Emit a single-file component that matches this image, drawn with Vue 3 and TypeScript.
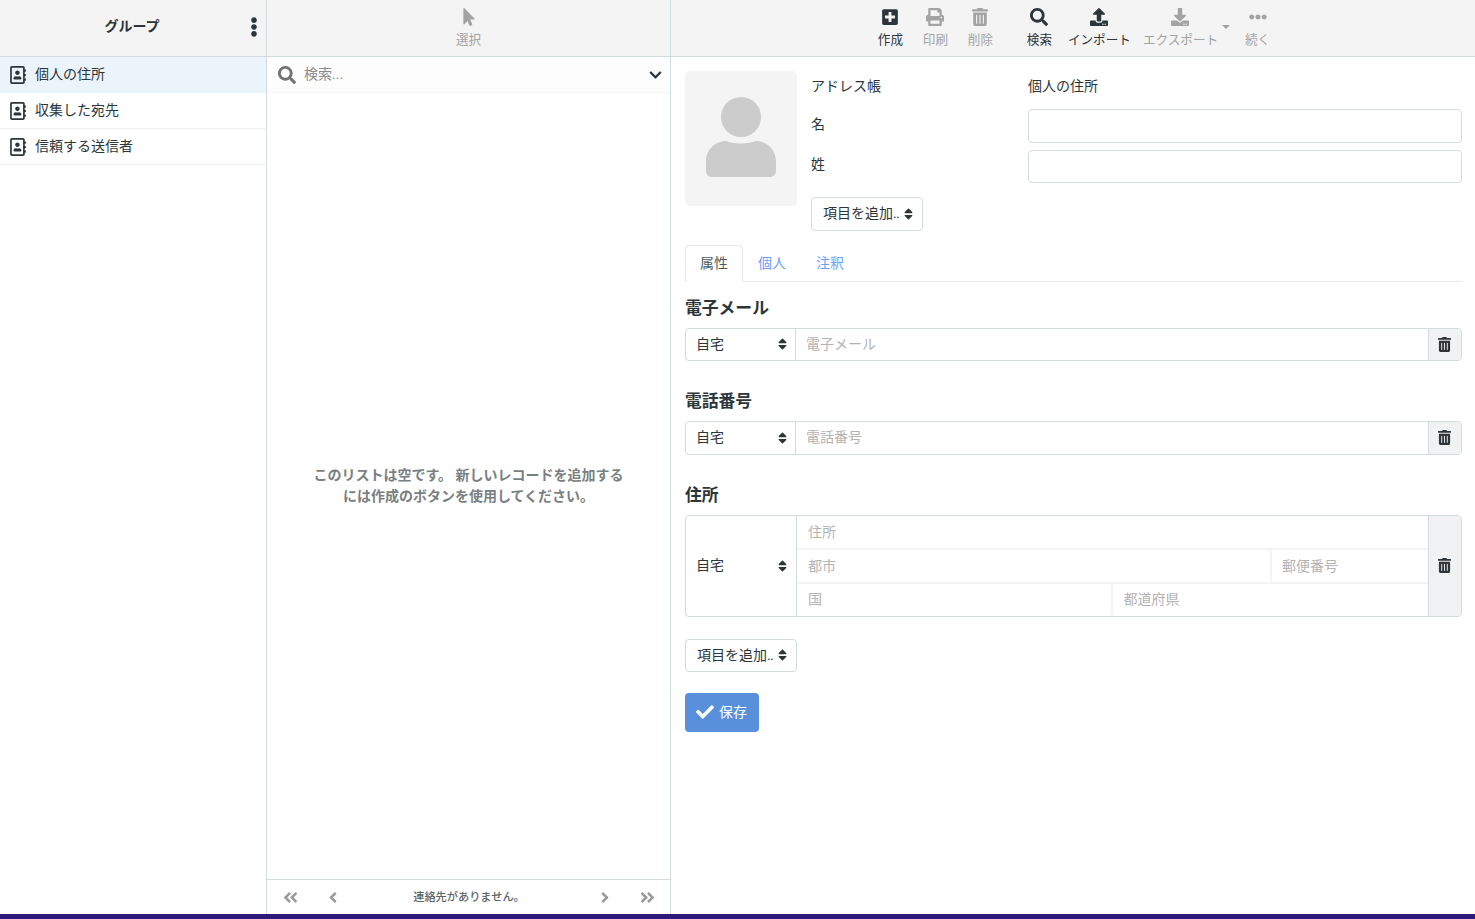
<template>
    <div class="page">
        <div class="layout">
            <aside class="col-groups">
                <header class="head">
                    <span class="head-title">グループ</span>
                    <svg class="head-more" viewBox="0 0 192 512"><path :d="icons.ellipsisV" /></svg>
                </header>
                <ul class="group-list">
                    <li v-for="(g, i) in groups" :key="g" class="group-item" :class="{ selected: i === 0 }">
                        <svg class="group-icon" viewBox="0 0 448 512"><path :d="icons.book" /></svg>
                        <span>{{ g }}</span>
                    </li>
                </ul>
            </aside>

            <section class="col-list">
                <header class="head head-center">
                    <div class="tool disabled">
                        <svg class="tool-icon" viewBox="0 0 320 512"><path :d="icons.pointer" /></svg>
                        <span>選択</span>
                    </div>
                </header>
                <div class="searchbar">
                    <svg class="search-icon" viewBox="0 0 512 512"><path :d="icons.search" /></svg>
                    <input class="search-input" placeholder="検索..." />
                    <svg class="search-chevron" viewBox="0 0 448 512"><path :d="icons.chevronDown" /></svg>
                </div>
                <div class="empty">
                    <p>このリストは空です。 新しいレコードを追加する<br />には作成のボタンを使用してください。</p>
                </div>
                <footer class="pager">
                    <svg class="pager-icon" viewBox="0 0 448 512"><path :d="icons.doubleLeft" /></svg>
                    <svg class="pager-icon single" viewBox="0 0 256 512"><path :d="icons.angleLeft" /></svg>
                    <span class="pager-text">連絡先がありません。</span>
                    <svg class="pager-icon single" viewBox="0 0 256 512"><path :d="icons.angleRight" /></svg>
                    <svg class="pager-icon" viewBox="0 0 448 512"><path :d="icons.doubleRight" /></svg>
                </footer>
            </section>

            <main class="col-form">
                <header class="head head-center toolbar">
                    <template v-for="t in tools" :key="t.label">
                        <div class="tool" :class="{ disabled: t.disabled, spaced: t.spaced }">
                            <svg class="tool-icon" :viewBox="t.box"><path :d="t.path" /></svg>
                            <span>{{ t.label }}</span>
                        </div>
                        <span v-if="t.caret" class="caret"></span>
                    </template>
                </header>

                <form class="form" @submit.prevent>
                    <div class="contact-head">
                        <div class="photo">
                            <svg class="photo-icon" viewBox="0 0 70 80">
                                <circle cx="35" cy="20" r="20" />
                                <path d="M20 44c4 1.500 9 2.500 15 2.500s11-1 15-2.500c11 0 20 9 20 20v10c0 3.300-2.700 6-6 6H6c-3.300 0-6-2.700-6-6V64c0-11 9-20 20-20z" />
                            </svg>
                        </div>
                        <div class="head-fields">
                            <div class="field-row book-row">
                                <span>アドレス帳</span>
                                <span>個人の住所</span>
                            </div>
                            <div class="field-row">
                                <label>名</label>
                                <input class="text-input" />
                            </div>
                            <div class="field-row">
                                <label>姓</label>
                                <input class="text-input" />
                            </div>
                            <div class="select add-select small">
                                <span>項目を追加<span class="dots">..</span></span>
                                <svg class="sort" viewBox="0 0 320 512"><path :d="icons.sort" /></svg>
                            </div>
                        </div>
                    </div>

                    <nav class="tabs">
                        <a class="tab active">属性</a>
                        <a class="tab">個人</a>
                        <a class="tab">注釈</a>
                    </nav>

                    <h3 class="section-title">電子メール</h3>
                    <div class="group">
                        <div class="select inner">
                            <span>自宅</span>
                            <svg class="sort" viewBox="0 0 320 512"><path :d="icons.sort" /></svg>
                        </div>
                        <input class="group-input" placeholder="電子メール" />
                        <div class="group-trash">
                            <svg viewBox="0 0 448 512"><path :d="icons.trash" /></svg>
                        </div>
                    </div>

                    <h3 class="section-title">電話番号</h3>
                    <div class="group">
                        <div class="select inner">
                            <span>自宅</span>
                            <svg class="sort" viewBox="0 0 320 512"><path :d="icons.sort" /></svg>
                        </div>
                        <input class="group-input" placeholder="電話番号" />
                        <div class="group-trash">
                            <svg viewBox="0 0 448 512"><path :d="icons.trash" /></svg>
                        </div>
                    </div>

                    <h3 class="section-title">住所</h3>
                    <div class="group address">
                        <div class="select inner">
                            <span>自宅</span>
                            <svg class="sort" viewBox="0 0 320 512"><path :d="icons.sort" /></svg>
                        </div>
                        <div class="address-fields">
                            <input class="addr-input" placeholder="住所" />
                            <div class="addr-row">
                                <input class="addr-input city" placeholder="都市" />
                                <input class="addr-input zip" placeholder="郵便番号" />
                            </div>
                            <div class="addr-row">
                                <input class="addr-input half" placeholder="国" />
                                <input class="addr-input half" placeholder="都道府県" />
                            </div>
                        </div>
                        <div class="group-trash">
                            <svg viewBox="0 0 448 512"><path :d="icons.trash" /></svg>
                        </div>
                    </div>

                    <div class="select add-select bottom">
                        <span>項目を追加<span class="dots">..</span></span>
                        <svg class="sort" viewBox="0 0 320 512"><path :d="icons.sort" /></svg>
                    </div>

                    <button class="save-btn" type="submit">
                        <svg viewBox="0 0 512 512"><path :d="icons.check" /></svg>
                        <span>保存</span>
                    </button>
                </form>
            </main>
        </div>
        <div class="bottom-bar"></div>
    </div>
</template>

<script setup lang="ts">
interface Tool {
    label: string
    box: string
    path: string
    disabled?: boolean
    spaced?: boolean
    caret?: boolean
}

const icons = {
    ellipsisV:
        'M96 184c39.8 0 72 32.2 72 72s-32.2 72-72 72-72-32.2-72-72 32.2-72 72-72zM24 80c0 39.8 32.2 72 72 72s72-32.2 72-72S135.8 8 96 8 24 40.200 24 80zm0 352c0 39.8 32.2 72 72 72s72-32.2 72-72-32.2-72-72-72-72 32.2-72 72z',
    book: 'M436 160c6.600 0 12-5.400 12-12v-40c0-6.600-5.400-12-12-12h-20V48c0-26.500-21.500-48-48-48H48C21.500 0 0 21.500 0 48v416c0 26.500 21.500 48 48 48h320c26.500 0 48-21.500 48-48v-48h20c6.600 0 12-5.400 12-12v-40c0-6.600-5.400-12-12-12h-20v-64h20c6.600 0 12-5.400 12-12v-40c0-6.600-5.400-12-12-12h-20v-64h20zm-68 304H48V48h320v416zM208 256c35.300 0 64-28.700 64-64s-28.700-64-64-64-64 28.700-64 64 28.700 64 64 64zm-89.600 128h179.200c12.400 0 22.400-8.600 22.400-19.200v-19.200c0-31.800-30.100-57.600-67.200-57.600-10.800 0-18.700 8-44.800 8-26.900 0-33.400-8-44.800-8-37.100 0-67.200 25.800-67.200 57.600v19.200c0 10.600 10 19.200 22.400 19.200z',
    pointer:
        'M302.189 329.126H196.105l55.831 135.993c3.889 9.428-.555 19.999-9.444 23.999l-49.165 21.427c-9.165 4-19.443-.571-23.332-9.714l-53.053-129.136-86.664 89.138C18.729 472.71 0 463.554 0 447.977V18.299C0 1.899 19.921-6.096 30.277 5.443l284.412 292.542c11.472 11.179 3.007 31.141-12.5 31.141z',
    search: 'M505 442.700L405.300 343c-4.500-4.500-10.600-7-17-7H372c27.600-35.300 44-79.700 44-128C416 93.100 322.900 0 208 0S0 93.100 0 208s93.100 208 208 208c48.300 0 92.700-16.400 128-44v16.300c0 6.400 2.500 12.500 7 17l99.700 99.700c9.400 9.400 24.600 9.400 33.900 0l28.300-28.300c9.400-9.400 9.400-24.600.1-34zM208 336c-70.700 0-128-57.200-128-128 0-70.700 57.200-128 128-128 70.700 0 128 57.200 128 128 0 70.700-57.200 128-128 128z',
    chevronDown:
        'M207.029 381.476L12.686 187.132c-9.373-9.373-9.373-24.569 0-33.941l22.667-22.667c9.357-9.357 24.522-9.375 33.901-.04L224 284.505l154.745-154.021c9.379-9.335 24.544-9.317 33.901.04l22.667 22.667c9.373 9.373 9.373 24.569 0 33.941L240.971 381.476c-9.373 9.372-24.569 9.372-33.942 0z',
    doubleLeft:
        'M223.700 239l136-136c9.400-9.400 24.600-9.400 33.900 0l22.600 22.600c9.400 9.400 9.400 24.600 0 33.900L319.900 256l96.400 96.400c9.400 9.400 9.400 24.600 0 33.900L393.700 409c-9.400 9.400-24.600 9.400-33.900 0l-136-136c-9.500-9.400-9.500-24.600-.1-34zm-192 34l136 136c9.400 9.400 24.600 9.400 33.900 0l22.600-22.600c9.400-9.400 9.400-24.600 0-33.900L127.900 256l96.400-96.400c9.400-9.400 9.400-24.600 0-33.900L201.700 103c-9.400-9.400-24.600-9.400-33.900 0l-136 136c-9.500 9.400-9.500 24.600-.1 34z',
    angleLeft:
        'M31.700 239l136-136c9.400-9.400 24.600-9.400 33.900 0l22.600 22.600c9.400 9.400 9.400 24.600 0 33.900L127.900 256l96.400 96.400c9.400 9.400 9.400 24.600 0 33.900L201.700 409c-9.400 9.400-24.600 9.400-33.900 0l-136-136c-9.500-9.400-9.500-24.600-.1-34z',
    angleRight:
        'M224.300 273l-136 136c-9.400 9.400-24.600 9.400-33.900 0l-22.600-22.600c-9.400-9.400-9.400-24.600 0-33.900l96.400-96.400-96.400-96.400c-9.400-9.400-9.400-24.600 0-33.900L54.300 103c9.400-9.400 24.600-9.400 33.900 0l136 136c9.500 9.400 9.500 24.600.1 34z',
    doubleRight:
        'M224.300 273l-136 136c-9.400 9.400-24.600 9.400-33.900 0l-22.600-22.600c-9.400-9.400-9.400-24.600 0-33.900l96.400-96.400-96.400-96.400c-9.400-9.400-9.400-24.600 0-33.900L54.300 103c9.400-9.400 24.600-9.400 33.900 0l136 136c9.500 9.400 9.500 24.600.1 34zm192-34l-136-136c-9.400-9.400-24.600-9.400-33.900 0l-22.600 22.600c-9.400 9.400-9.400 24.600 0 33.900l96.400 96.400-96.400 96.400c-9.400 9.400-9.400 24.600 0 33.900l22.600 22.600c9.400 9.400 24.600 9.400 33.900 0l136-136c9.500-9.400 9.500-24.600-.1-34z',
    sort: 'M41 288h238c21.400 0 32.100 25.900 17 41L177 448c-9.400 9.400-24.600 9.400-33.900 0L24 329c-15.100-15.100-4.400-41 17-41zm255-105L177 64c-9.400-9.400-24.600-9.400-33.900 0L24 183c-15.100 15.100-4.400 41 17 41h238c21.400 0 32.100-25.900 17-41z',
    trash: 'M32 464a48 48 0 0 0 48 48h288a48 48 0 0 0 48-48V128H32zm272-256a16 16 0 0 1 32 0v224a16 16 0 0 1-32 0zm-96 0a16 16 0 0 1 32 0v224a16 16 0 0 1-32 0zm-96 0a16 16 0 0 1 32 0v224a16 16 0 0 1-32 0zM432 32H312l-9.400-18.700A24 24 0 0 0 281.100 0H166.800a23.720 23.720 0 0 0-21.400 13.300L136 32H16A16 16 0 0 0 0 48v32a16 16 0 0 0 16 16h416a16 16 0 0 0 16-16V48a16 16 0 0 0-16-16z',
    check: 'M173.898 439.404l-166.400-166.400c-9.997-9.997-9.997-26.206 0-36.204l36.203-36.204c9.997-9.998 26.207-9.998 36.204 0L192 312.690 432.095 72.596c9.997-9.997 26.207-9.997 36.204 0l36.203 36.204c9.997 9.997 9.997 26.206 0 36.204l-294.400 294.401c-9.998 9.997-26.207 9.997-36.204-.001z',
    plus: 'M400 32H48C21.500 32 0 53.500 0 80v352c0 26.500 21.500 48 48 48h352c26.500 0 48-21.500 48-48V80c0-26.500-21.500-48-48-48zm-32 252c0 6.600-5.400 12-12 12h-92v92c0 6.600-5.400 12-12 12h-56c-6.600 0-12-5.400-12-12v-92H92c-6.600 0-12-5.400-12-12v-56c0-6.600 5.400-12 12-12h92v-92c0-6.600 5.400-12 12-12h56c6.600 0 12 5.400 12 12v92h92c6.600 0 12 5.400 12 12v56z',
    print: 'M448 192V77.250c0-8.490-3.370-16.620-9.370-22.630L393.370 9.370c-6-6-14.140-9.370-22.630-9.370H96C78.330 0 64 14.330 64 32v160c-35.350 0-64 28.650-64 64v112c0 8.840 7.160 16 16 16h48v96c0 17.670 14.330 32 32 32h320c17.670 0 32-14.330 32-32v-96h48c8.840 0 16-7.160 16-16V256c0-35.350-28.650-64-64-64zm-64 256H128v-96h256v96zm0-224H128V64h192v48c0 8.840 7.160 16 16 16h48v96zm48 72c-13.250 0-24-10.750-24-24 0-13.260 10.750-24 24-24s24 10.740 24 24c0 13.250-10.750 24-24 24z',
    upload: 'M296 384h-80c-13.300 0-24-10.700-24-24V192h-87.700c-17.800 0-26.700-21.500-14.100-34.100L242.300 5.700c7.500-7.500 19.800-7.500 27.300 0l152.200 152.200c12.600 12.600 3.700 34.100-14.100 34.100H320v168c0 13.300-10.700 24-24 24zm216-8v112c0 13.300-10.700 24-24 24H24c-13.300 0-24-10.700-24-24V376c0-13.300 10.700-24 24-24h136v8c0 30.900 25.100 56 56 56h80c30.900 0 56-25.100 56-56v-8h136c13.300 0 24 10.700 24 24zm-124 88c0-11-9-20-20-20s-20 9-20 20 9 20 20 20 20-9 20-20zm64 0c0-11-9-20-20-20s-20 9-20 20 9 20 20 20 20-9 20-20z',
    download:
        'M216 0h80c13.300 0 24 10.700 24 24v168h87.700c17.800 0 26.700 21.500 14.100 34.100L269.700 378.300c-7.500 7.500-19.800 7.500-27.300 0L90.100 226.100c-12.600-12.600-3.700-34.100 14.100-34.100H192V24c0-13.300 10.700-24 24-24zm296 376v112c0 13.300-10.700 24-24 24H24c-13.300 0-24-10.700-24-24V376c0-13.300 10.700-24 24-24h146.700l49 49c20.100 20.100 52.500 20.100 72.600 0l49-49H488c13.300 0 24 10.700 24 24zm-124 88c0-11-9-20-20-20s-20 9-20 20 9 20 20 20 20-9 20-20zm64 0c0-11-9-20-20-20s-20 9-20 20 9 20 20 20 20-9 20-20z',
    ellipsisH:
        'M328 256c0 39.800-32.200 72-72 72s-72-32.200-72-72 32.200-72 72-72 72 32.200 72 72zm104-72c-39.800 0-72 32.200-72 72s32.200 72 72 72 72-32.200 72-72-32.200-72-72-72zm-352 0c-39.800 0-72 32.200-72 72s32.200 72 72 72 72-32.200 72-72-32.200-72-72-72z'
}

const groups = ['個人の住所', '収集した宛先', '信頼する送信者']

const tools: Tool[] = [
    { label: '作成', box: '0 0 448 512', path: icons.plus },
    { label: '印刷', box: '0 0 512 512', path: icons.print, disabled: true },
    { label: '削除', box: '0 0 448 512', path: icons.trash, disabled: true },
    { label: '検索', box: '0 0 512 512', path: icons.search, spaced: true },
    { label: 'インポート', box: '0 0 512 512', path: icons.upload },
    { label: 'エクスポート', box: '0 0 512 512', path: icons.download, disabled: true, caret: true },
    { label: '続く', box: '0 0 512 512', path: icons.ellipsisH, disabled: true }
]
</script>

<style>
html,
body {
    margin: 0;
    height: 100%;
    overflow: hidden;
}
</style>

<style scoped>
.page {
    height: 100vh;
    display: flex;
    flex-direction: column;
    font-family: Roboto, "Noto Sans CJK JP", sans-serif;
    font-size: 14px;
    line-height: 21px;
    color: #2c363a;
    background: #fff;
}

.layout {
    flex: 1;
    min-height: 0;
    display: flex;
}

.bottom-bar {
    height: 5px;
    background: #2b1a78;
}

.col-groups {
    width: 266px;
    border-right: 1px solid #d4dbde;
    display: flex;
    flex-direction: column;
}

.col-list {
    width: 403px;
    border-right: 1px solid #d4dbde;
    display: flex;
    flex-direction: column;
}

.col-form {
    flex: 1;
    min-width: 0;
    display: flex;
    flex-direction: column;
}

.head {
    height: 56px;
    flex-shrink: 0;
    background: #f4f4f4;
    border-bottom: 1px solid #d4dbde;
    display: flex;
    align-items: center;
    position: relative;
}

.head-center {
    justify-content: center;
    align-items: flex-start;
}

.toolbar {
    padding-left: 2px;
}

.head-title {
    flex: 1;
    text-align: center;
    font-weight: 700;
    padding-right: 2px;
    margin-top: -3px;
}

.head-more {
    position: absolute;
    left: 250px;
    top: 17px;
    width: 8px;
    height: 20px;
    fill: #2c363a;
}

.group-list {
    list-style: none;
    margin: 0;
    padding: 0;
}

.group-item {
    height: 35px;
    display: flex;
    align-items: center;
    gap: 9px;
    padding-left: 10px;
    border-bottom: 1px solid #f2f2f2;
}

.group-item.selected {
    background: #ebf3fb;
    border-bottom-color: #ebf3fb;
}

.group-icon {
    width: 16px;
    height: 18px;
    fill: #2c363a;
}

.tool {
    min-width: 45px;
    padding: 8px 6px 0;
    box-sizing: border-box;
    display: flex;
    flex-direction: column;
    align-items: center;
    font-size: 12.6px;
    line-height: 18px;
    color: #2c363a;
}

.tool.disabled {
    color: #a3a3a3;
}

.tool.spaced {
    margin-left: 14px;
}

.tool-icon {
    width: 20px;
    height: 18px;
    margin-bottom: 5px;
    fill: #2c363a;
}

.tool.disabled .tool-icon {
    fill: #a3a3a3;
}

.caret {
    width: 11px;
    position: relative;
}

.caret::after {
    content: "";
    position: absolute;
    left: -2px;
    top: 25px;
    border: 4px solid transparent;
    border-top: 4px solid #a3a3a3;
}

.searchbar {
    height: 35px;
    flex-shrink: 0;
    border-bottom: 1px solid #f4f4f4;
    background: #fdfdfd;
    display: flex;
    align-items: center;
    padding: 0 8px 0 11px;
    gap: 8px;
}

.search-icon {
    width: 18px;
    height: 18px;
    fill: #707274;
}

.search-input {
    flex: 1;
    min-width: 0;
    border: 0;
    outline: 0;
    padding: 0;
    background: transparent;
    font: inherit;
}

.search-input::placeholder {
    color: #8a8a8a;
    opacity: 1;
}

.search-chevron {
    width: 13px;
    height: 14px;
    fill: #2c363a;
}

.empty {
    flex: 1;
    display: flex;
    align-items: center;
    justify-content: center;
    text-align: center;
    color: #7a7f82;
    font-weight: 700;
}

.empty p {
    margin: 0;
}

.pager {
    height: 34px;
    flex-shrink: 0;
    border-top: 1px solid #d4dbde;
    display: flex;
    align-items: center;
    padding: 0 14px 0 15px;
}

.pager-icon {
    width: 17px;
    height: 17px;
    fill: #9a9a9a;
}

.pager-icon.single {
    width: 10px;
    margin: 0 29px;
}

.pager-text {
    flex: 1;
    text-align: center;
    font-size: 11.2px;
    font-weight: 500;
    color: #5c6468;
}

.form {
    padding: 14px 13px 0 14px;
}

.contact-head {
    display: flex;
    gap: 14px;
}

.photo {
    width: 112px;
    height: 135px;
    flex-shrink: 0;
    border-radius: 5px;
    background: #f4f4f4;
    display: flex;
    align-items: center;
    justify-content: center;
}

.photo-icon {
    width: 70px;
    height: 80px;
    margin-top: -3px;
    fill: #cccccc;
}

.head-fields {
    flex: 1;
    min-width: 0;
}

.field-row {
    display: grid;
    grid-template-columns: 217px 1fr;
    align-items: center;
    margin-bottom: 7px;
}

.field-row label {
    margin-bottom: 3px;
}

.book-row {
    height: 30px;
    margin-bottom: 8px;
}

.text-input {
    height: 33.500px;
    box-sizing: border-box;
    width: 100%;
    border: 1px solid #d4dbde;
    border-radius: 4px;
    outline: 0;
}

.select {
    display: flex;
    align-items: center;
    justify-content: space-between;
    padding: 0 9px 0 11px;
    box-sizing: border-box;
}

.dots {
    letter-spacing: -0.6px;
}

.add-select {
    border: 1px solid #d4dbde;
    border-radius: 4px;
    background: #fff;
    height: 33.500px;
}

.add-select.small {
    width: 112px;
    margin-top: 14px;
}

.add-select.bottom {
    width: 112px;
    height: 33px;
    margin-top: 22px;
}

.sort {
    width: 9px;
    height: 14px;
    fill: #2c363a;
    flex-shrink: 0;
}

.tabs {
    display: flex;
    margin-top: 14px;
    height: 36px;
    border-bottom: 1px solid #e4e8ea;
}

.tab {
    height: 37px;
    box-sizing: border-box;
    padding: 0 14px;
    display: flex;
    align-items: center;
    color: #6a9fff;
    border: 1px solid transparent;
}

.tab.active {
    color: #4e5a5f;
    background: #fff;
    border-color: #e4e8ea #e4e8ea #fff;
    border-radius: 4px 4px 0 0;
}

.section-title {
    margin: 15px 0 9px;
    font-size: 16.800px;
    line-height: 22px;
    font-weight: 700;
}

.group {
    display: flex;
    height: 33.500px;
    box-sizing: border-box;
    border: 1px solid #d4dbde;
    border-radius: 4px;
    margin-bottom: 29px;
}

.group + .section-title {
    margin-top: 29px;
}

.inner {
    width: 110px;
    flex-shrink: 0;
    border-right: 1px solid #d4dbde;
    padding-left: 10px;
    padding-right: 8px;
}

.group-input {
    flex: 1;
    min-width: 0;
    border: 0;
    outline: 0;
    padding: 0 11px 0 10px;
    font: inherit;
    background: transparent;
}

.group-input::placeholder,
.addr-input::placeholder {
    color: #b3b3b3;
    opacity: 1;
}

.group-trash {
    width: 33px;
    flex-shrink: 0;
    border-left: 1px solid #d4dbde;
    background: #f1f2f4;
    border-radius: 0 3px 3px 0;
    display: flex;
    align-items: center;
    justify-content: center;
    padding-right: 1px;
    box-sizing: border-box;
}

.group-trash svg {
    width: 13px;
    height: 15px;
    fill: #2c363a;
}

.group.address {
    height: 102px;
    margin-bottom: 0;
}

.address .inner {
    width: 111px;
    padding-right: 9px;
}

.address-fields {
    flex: 1;
    min-width: 0;
    display: flex;
    flex-direction: column;
}

.addr-row {
    display: flex;
    border-top: 2px solid #f4f4f4;
}

.addr-input {
    height: 32px;
    box-sizing: border-box;
    border: 0;
    outline: 0;
    padding: 0 11px;
    font: inherit;
    background: transparent;
    min-width: 0;
}

.addr-input.city {
    flex: 1;
    border-right: 2px solid #f4f4f4;
}

.addr-input.zip {
    width: 156px;
    padding-left: 10px;
}

.addr-input.half {
    width: 50%;
    height: 31px;
}

.addr-input.half:first-child {
    border-right: 2px solid #f4f4f4;
}

.save-btn {
    display: flex;
    align-items: center;
    gap: 5px;
    margin-top: 21px;
    width: 74px;
    height: 39px;
    padding: 0 0 0 11px;
    box-sizing: border-box;
    border: 0;
    border-radius: 4px;
    background: #5890dc;
    color: #fff;
    font: inherit;
}

.save-btn svg {
    width: 18px;
    height: 18px;
    fill: #fff;
}
</style>
